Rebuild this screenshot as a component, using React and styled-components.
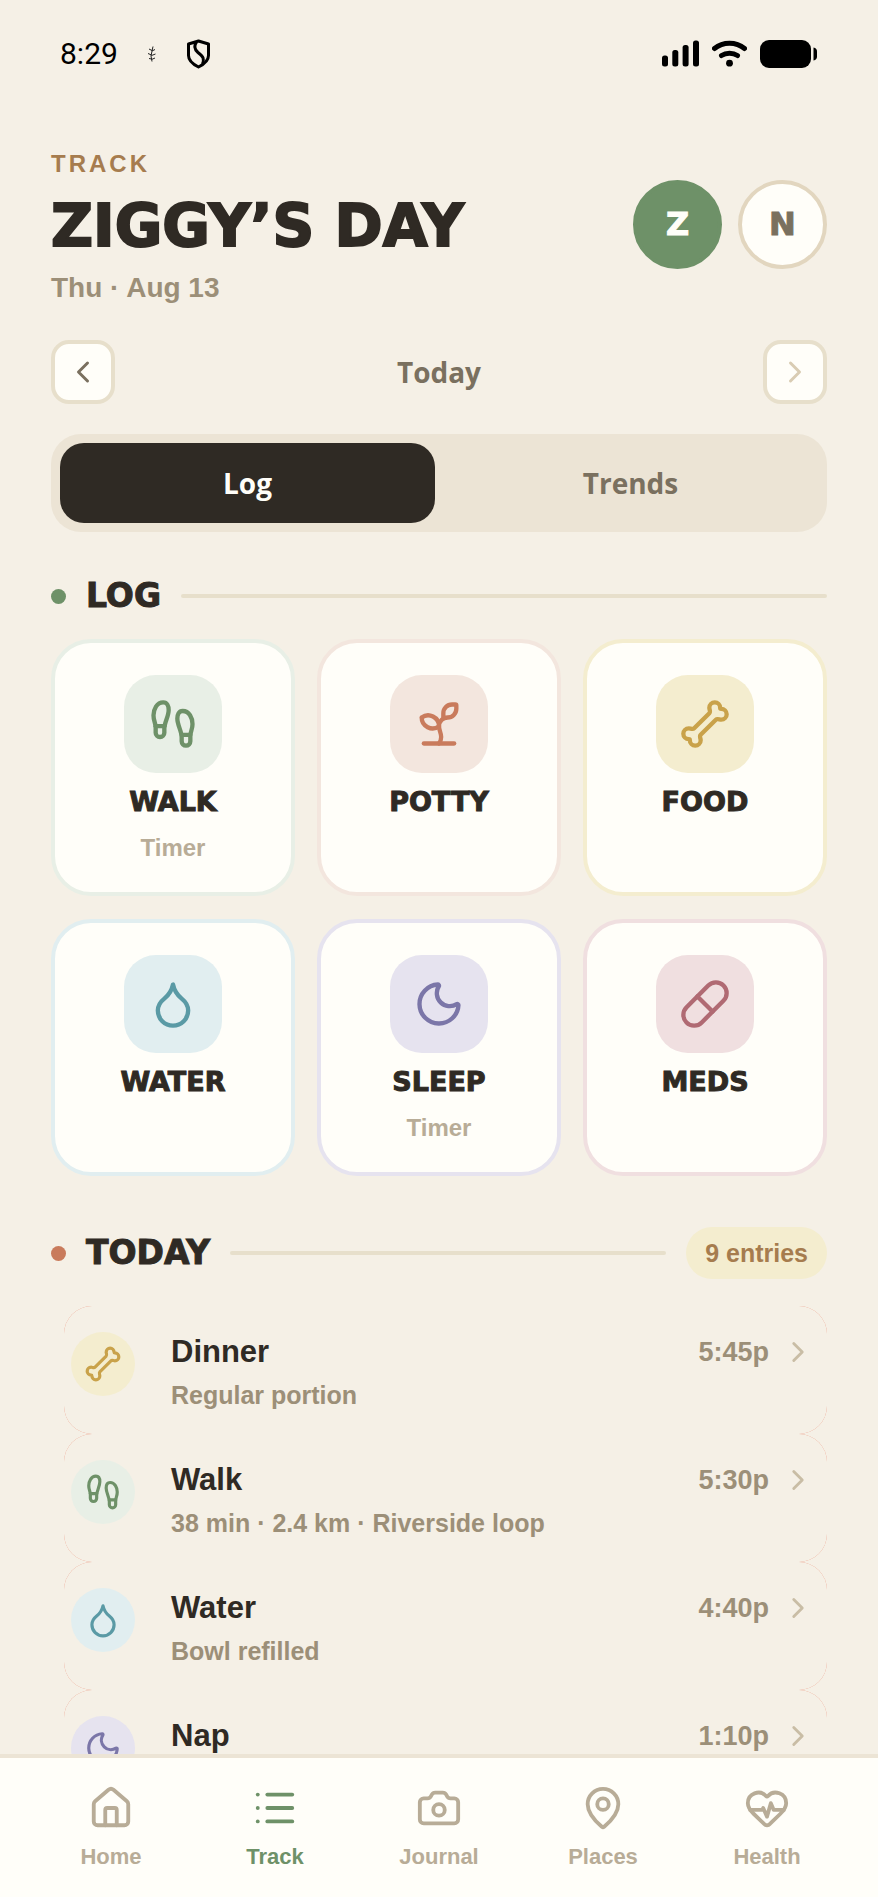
import { useState } from 'react';
import styled, { createGlobalStyle } from 'styled-components';
import {
  Bone,
  Camera,
  ChevronLeft,
  ChevronRight,
  Droplet,
  Footprints,
  HeartPulse,
  House,
  List,
  MapPin,
  Moon,
  Pill,
  Sprout,
} from 'lucide-react';

const colors = {
  page: '#f5f0e6',
  card: '#fffef9',
  ink: '#2f2a24',
  soft: '#7a705f',
  muted: '#9c8f78',
  faint: '#b8ac97',
  line: '#e7dfcb',
  track: '#ece4d5',
  brown: '#a67c4e',
  green: '#6e9168',
  clay: '#c97b5c',
};

const displayFont = "'DejaVu Sans', Verdana, sans-serif";

// each kind of entry has a strong color for the icon and a tint behind it
const kinds = {
  walk: { icon: Footprints, color: '#6e9168', tint: '#e8efe6' },
  potty: { icon: Sprout, color: '#c97b5c', tint: '#f3e6de' },
  food: { icon: Bone, color: '#c9a24a', tint: '#f4edcf' },
  water: { icon: Droplet, color: '#5a9aa5', tint: '#e1eef0' },
  sleep: { icon: Moon, color: '#7b76a8', tint: '#e6e3ef' },
  meds: { icon: Pill, color: '#b06a73', tint: '#f0dfe0' },
};

const quickLog = [
  { kind: 'walk', label: 'WALK', hint: 'Timer' },
  { kind: 'potty', label: 'POTTY' },
  { kind: 'food', label: 'FOOD' },
  { kind: 'water', label: 'WATER' },
  { kind: 'sleep', label: 'SLEEP', hint: 'Timer' },
  { kind: 'meds', label: 'MEDS' },
];

const entries = [
  { kind: 'food', title: 'Dinner', detail: 'Regular portion', time: '5:45p' },
  { kind: 'walk', title: 'Walk', detail: '38 min · 2.4 km · Riverside loop', time: '5:30p' },
  { kind: 'water', title: 'Water', detail: 'Bowl refilled', time: '4:40p' },
  { kind: 'sleep', title: 'Nap', time: '1:10p' },
];

const tabs = [
  { label: 'Home', icon: House },
  { label: 'Track', icon: List },
  { label: 'Journal', icon: Camera },
  { label: 'Places', icon: MapPin },
  { label: 'Health', icon: HeartPulse },
];

const GlobalStyle = createGlobalStyle`
  * {
    box-sizing: border-box;
  }
  body {
    margin: 0;
    background: ${colors.page};
    color: ${colors.ink};
    font-family: 'Liberation Sans', Arial, sans-serif;
    font-weight: 700;
  }
  button {
    font: inherit;
    color: inherit;
    border: 0;
    padding: 0;
    background: none;
    cursor: pointer;
  }
`;

const Screen = styled.div`
  height: 100vh;
  display: flex;
  flex-direction: column;
`;

const Content = styled.main`
  flex: 1;
  min-height: 0;
  overflow-y: auto;
  scrollbar-width: none;
  padding: 0 51px;
`;

const StatusBar = styled.div`
  height: 107px;
  padding: 0 10px 0 9px;
  display: flex;
  align-items: center;
  justify-content: space-between;
  color: #000;
`;

const StatusGroup = styled.div`
  display: flex;
  align-items: center;
  gap: ${({ $gap }) => $gap}px;
`;

const Clock = styled.span`
  font: 400 30px/36px Roboto, sans-serif;
`;

const Header = styled.header`
  margin-top: 43px;
  display: flex;
  align-items: center;
  justify-content: space-between;
`;

const Eyebrow = styled.div`
  font-size: 24px;
  line-height: 28px;
  letter-spacing: 3px;
  color: ${colors.brown};
`;

// the stroke thickens the bold cut up to a black weight
const Title = styled.h1`
  margin: 16px 0 14px;
  font: 700 58px/64px ${displayFont};
  -webkit-text-stroke: 2px currentColor;
`;

const DateLine = styled.div`
  font-size: 28px;
  line-height: 32px;
  color: ${colors.muted};
`;

const Avatars = styled.div`
  padding-bottom: 6px;
  display: flex;
  gap: 16px;
`;

const Avatar = styled.button`
  width: 89px;
  height: 89px;
  border-radius: 50%;
  border: 4px solid ${({ $active }) => ($active ? colors.green : '#e2d6bf')};
  background: ${({ $active }) => ($active ? colors.green : colors.card)};
  color: ${({ $active }) => ($active ? colors.card : colors.soft)};
  font: 700 32px/36px ${displayFont};
  -webkit-text-stroke: 1px currentColor;
`;

const DayNav = styled.div`
  margin-top: 36px;
  display: flex;
  align-items: center;
  justify-content: space-between;
  font: 700 28px/36px 'Open Sans', sans-serif;
  color: ${colors.soft};
`;

const DayButton = styled.button`
  width: 64px;
  height: 64px;
  display: grid;
  place-items: center;
  border: 4px solid ${colors.line};
  border-radius: 18px;
  background: ${colors.card};

  &:disabled {
    color: #d9ccb3;
    cursor: default;
  }
`;

const Segments = styled.div`
  margin-top: 30px;
  padding: 9px;
  display: flex;
  gap: 8px;
  border-radius: 30px;
  background: ${colors.track};
`;

const Segment = styled.button`
  flex: 1;
  height: 80px;
  border-radius: 24px;
  font: 700 28px/36px 'Open Sans', sans-serif;
  background: ${({ $active }) => ($active ? colors.ink : 'transparent')};
  color: ${({ $active }) => ($active ? colors.card : colors.soft)};
`;

const SectionHead = styled.div`
  height: 52px;
  margin-top: ${({ $top }) => $top}px;
  display: flex;
  align-items: center;
  gap: 20px;
`;

const Dot = styled.span`
  width: 15px;
  height: 15px;
  border-radius: 50%;
  background: ${({ $color }) => $color};
`;

const SectionTitle = styled.h2`
  margin: 0;
  font: 700 33px/40px ${displayFont};
  -webkit-text-stroke: 1px currentColor;
`;

const Rule = styled.span`
  flex: 1;
  height: 4px;
  border-radius: 2px;
  background: ${colors.line};
`;

const CountPill = styled.span`
  padding: 0 19px;
  border-radius: 26px;
  background: #f4edcf;
  color: ${colors.brown};
  font-size: 25px;
  line-height: 52px;
`;

const LogGrid = styled.div`
  margin-top: 17px;
  display: grid;
  grid-template-columns: repeat(3, 1fr);
  grid-auto-rows: 257px;
  gap: 23px 22px;
`;

const LogCard = styled.button`
  padding: 32px 0 0;
  display: flex;
  flex-direction: column;
  align-items: center;
  justify-content: flex-start;
  border: 4px solid ${({ $tint }) => $tint};
  border-radius: 40px;
  background: ${colors.card};
`;

const IconTile = styled.span`
  width: 98px;
  height: 98px;
  display: grid;
  place-items: center;
  border-radius: 32px;
  background: ${({ $tint }) => $tint};
  color: ${({ $color }) => $color};
`;

const LogLabel = styled.span`
  margin-top: 13px;
  font: 700 27px/32px ${displayFont};
  -webkit-text-stroke: 1px currentColor;
`;

const LogHint = styled.span`
  margin-top: 16px;
  font-size: 24px;
  line-height: 28px;
  color: ${colors.faint};
`;

const Timeline = styled.ul`
  margin: 27px 0 0 13px;
  padding: 0;
  list-style: none;
`;

const SwipeLayer = styled.li`
  border-radius: 28px;
  background: #e8836b;
`;

const EntryRow = styled.button`
  width: 100%;
  height: 128px;
  padding: 26px 12px 0 7px;
  display: flex;
  align-items: flex-start;
  border-radius: 28px;
  background: ${colors.page};
  text-align: left;
`;

const EntryIcon = styled.span`
  width: 64px;
  height: 64px;
  display: grid;
  place-items: center;
  border-radius: 50%;
  background: ${({ $tint }) => $tint};
  color: ${({ $color }) => $color};
`;

const EntryText = styled.span`
  flex: 1;
  margin-left: 36px;
  display: flex;
  flex-direction: column;
  gap: 7px;
`;

const EntryTitle = styled.span`
  font-size: 31px;
  line-height: 40px;
`;

const EntryDetail = styled.span`
  font-size: 25px;
  line-height: 32px;
  color: ${colors.muted};
`;

const EntryTime = styled.span`
  display: flex;
  align-items: center;
  gap: 12px;
  font-size: 27px;
  line-height: 40px;
  color: ${colors.muted};

  svg {
    color: #c9bda5;
  }
`;

const TabBar = styled.nav`
  height: 143px;
  padding: 27px 29px 0;
  display: flex;
  border-top: 4px solid ${colors.track};
  background: ${colors.card};
`;

const Tab = styled.a`
  flex: 1;
  display: flex;
  flex-direction: column;
  align-items: center;
  gap: 12px;
  font-size: 22px;
  line-height: 28px;
  text-decoration: none;
  color: ${({ $active }) => ($active ? colors.green : colors.faint)};
`;

const Twig = () => (
  <svg width="10" height="16" viewBox="0 0 10 16" fill="none" stroke="#222" strokeWidth="1">
    <path d="M6 0.5 5 5l-1 5 1 5.500M5 4.500 2 3M5 5 8 3.500M4.500 9 1 7.500M4.500 9.500 8.500 8M4.500 13 2 12.500M4.500 13.500 8 12" />
  </svg>
);

const Shield = () => (
  <svg width="25" height="30" viewBox="0 0 25 30" fill="none" stroke="#000" strokeWidth="3">
    <path d="M12.500 2 22.500 5v11.500c0 5-4 8.500-10 11.500-6-3-10-6.500-10-11.500V5z" strokeLinejoin="round" />
    <path d="M10.500 3C7.500 7 8 10 12 13.500c5.500 4.500 6.500 6 4.500 11.500" />
  </svg>
);

const Signal = () => (
  <svg width="37" height="27" viewBox="0 0 37 27" fill="#000">
    <rect x="0" y="15.500" width="6" height="11" rx="2.500" />
    <rect x="10.300" y="10" width="6" height="16.500" rx="2.500" />
    <rect x="20.600" y="5" width="6" height="21.500" rx="2.500" />
    <rect x="31" y="0.500" width="6" height="26" rx="2.500" />
  </svg>
);

const Wifi = () => (
  <svg width="35" height="27" viewBox="0 0 35 27" fill="none" stroke="#000" strokeWidth="5" strokeLinecap="round">
    <path d="M2.500 8.500C11 1.500 24 1.500 32.500 8.500" />
    <path d="M9.500 15.500c4.500-3 11.500-3 16 0" />
    <circle cx="17.500" cy="23.200" r="3.400" fill="#000" stroke="none" />
  </svg>
);

const Battery = () => (
  <svg width="57" height="28" viewBox="0 0 57 28" fill="#000">
    <rect width="51" height="28" rx="9" />
    <path d="M53.500 7.500c2.500.5 3.500 2 3.500 4v5c0 2-1 3.500-3.500 4z" />
  </svg>
);

function LogButton({ kind, label, hint }) {
  const { icon: Icon, color, tint } = kinds[kind];
  return (
    <LogCard type="button" $tint={tint}>
      <IconTile $tint={tint} $color={color}>
        <Icon size={52} />
      </IconTile>
      <LogLabel>{label}</LogLabel>
      {hint && <LogHint>{hint}</LogHint>}
    </LogCard>
  );
}

function Entry({ kind, title, detail, time }) {
  const { icon: Icon, color, tint } = kinds[kind];
  return (
    <SwipeLayer>
      <EntryRow type="button">
        <EntryIcon $tint={tint} $color={color}>
          <Icon size={38} />
        </EntryIcon>
        <EntryText>
          <EntryTitle>{title}</EntryTitle>
          {detail && <EntryDetail>{detail}</EntryDetail>}
        </EntryText>
        <EntryTime>
          {time}
          <ChevronRight size={34} />
        </EntryTime>
      </EntryRow>
    </SwipeLayer>
  );
}

export default function App() {
  const [pet, setPet] = useState('Z');
  const [view, setView] = useState('Log');

  return (
    <Screen>
      <GlobalStyle />
      <Content>
        <StatusBar>
          <StatusGroup $gap={29}>
            <Clock>8:29</Clock>
            <Twig />
            <Shield />
          </StatusGroup>
          <StatusGroup $gap={13}>
            <Signal />
            <Wifi />
            <Battery />
          </StatusGroup>
        </StatusBar>

        <Header>
          <div>
            <Eyebrow>TRACK</Eyebrow>
            <Title>ZIGGY’S DAY</Title>
            <DateLine>Thu · Aug 13</DateLine>
          </div>
          <Avatars>
            {['Z', 'N'].map((name) => (
              <Avatar key={name} type="button" $active={pet === name} onClick={() => setPet(name)}>
                {name}
              </Avatar>
            ))}
          </Avatars>
        </Header>

        <DayNav>
          <DayButton type="button" aria-label="Previous day">
            <ChevronLeft size={36} />
          </DayButton>
          <span>Today</span>
          <DayButton type="button" aria-label="Next day" disabled>
            <ChevronRight size={36} />
          </DayButton>
        </DayNav>

        <Segments>
          {['Log', 'Trends'].map((name) => (
            <Segment key={name} type="button" $active={view === name} onClick={() => setView(name)}>
              {name}
            </Segment>
          ))}
        </Segments>

        <SectionHead $top={38}>
          <Dot $color={colors.green} />
          <SectionTitle>LOG</SectionTitle>
          <Rule />
        </SectionHead>
        <LogGrid>
          {quickLog.map((item) => (
            <LogButton key={item.kind} {...item} />
          ))}
        </LogGrid>

        <SectionHead $top={51}>
          <Dot $color={colors.clay} />
          <SectionTitle>TODAY</SectionTitle>
          <Rule />
          <CountPill>9 entries</CountPill>
        </SectionHead>
        <Timeline>
          {entries.map((entry) => (
            <Entry key={entry.title} {...entry} />
          ))}
        </Timeline>
      </Content>

      <TabBar>
        {tabs.map(({ label, icon: Icon }) => (
          <Tab key={label} href="#" $active={label === 'Track'}>
            <Icon size={46} />
            {label}
          </Tab>
        ))}
      </TabBar>
    </Screen>
  );
}
